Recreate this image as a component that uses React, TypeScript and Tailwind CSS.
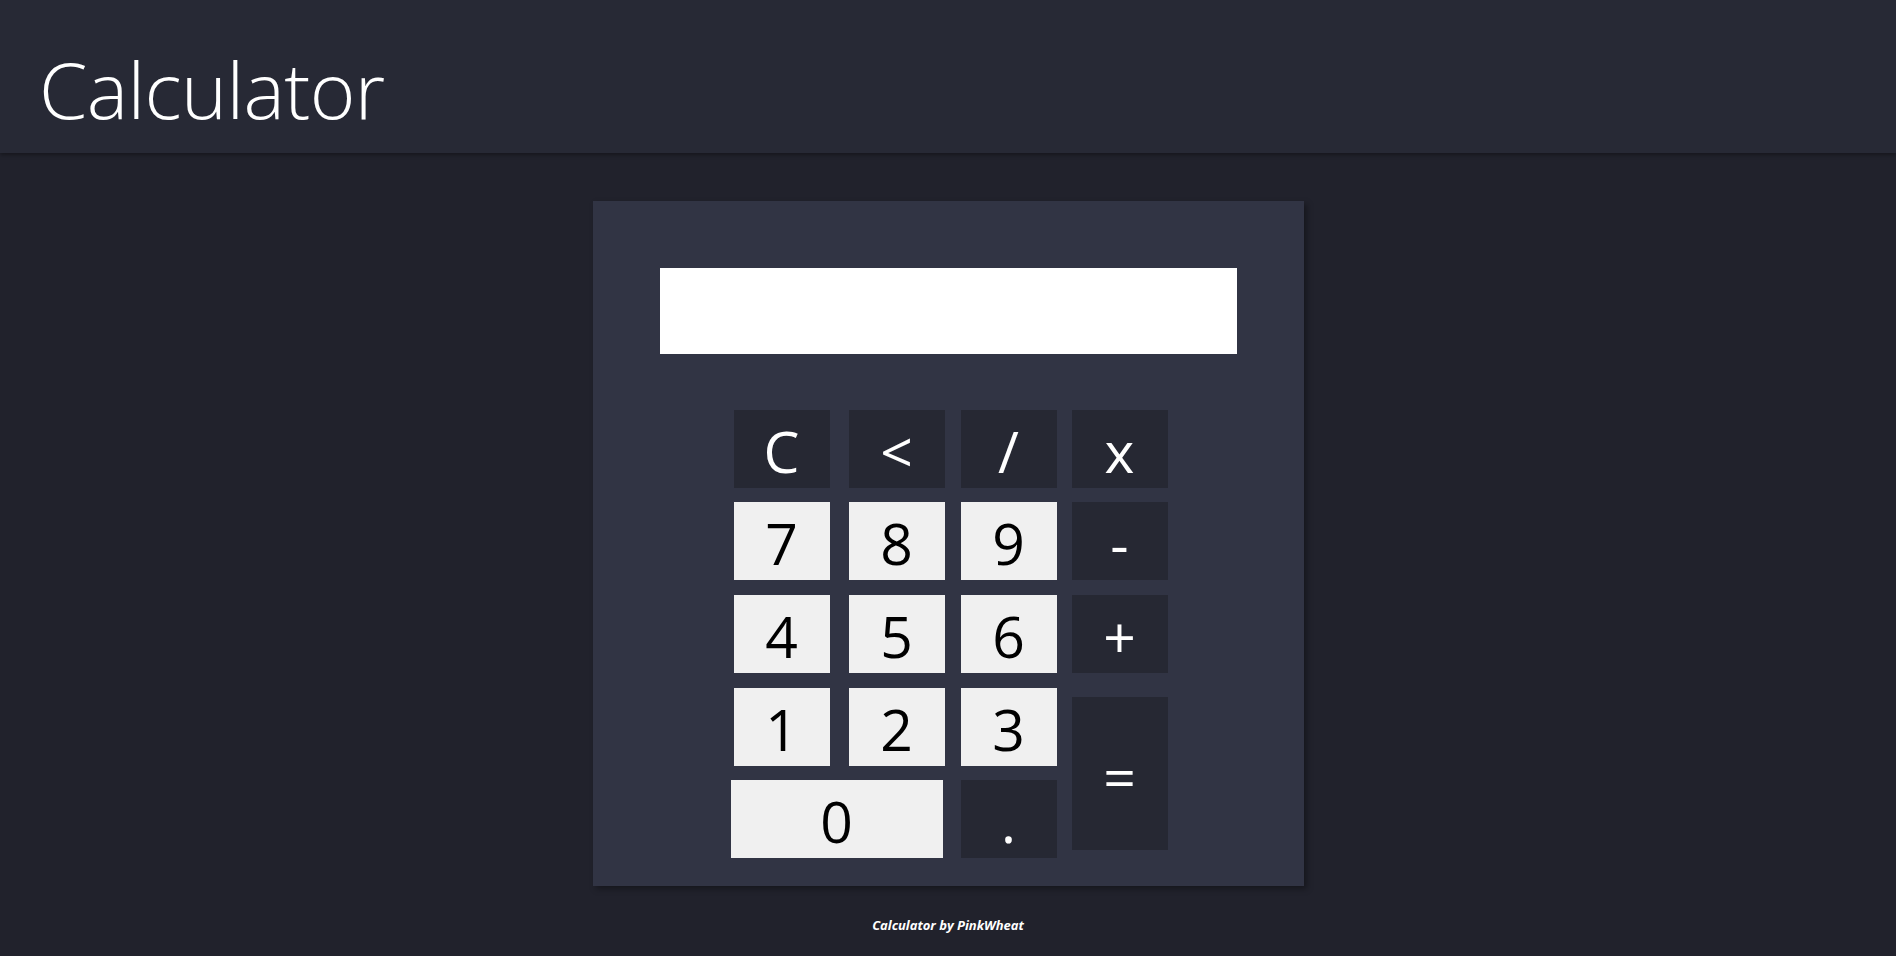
import React from "react";

type Key = {
  label: string;
  light?: boolean;
  className?: string;
};

const keys: Key[] = [
  { label: "C" },
  { label: "<" },
  { label: "/" },
  { label: "x" },
  { label: "7", light: true },
  { label: "8", light: true },
  { label: "9", light: true },
  { label: "-" },
  { label: "4", light: true },
  { label: "5", light: true },
  { label: "6", light: true },
  { label: "+" },
  { label: "1", light: true },
  { label: "2", light: true },
  { label: "3", light: true },
  { label: "=", className: "row-span-2 self-center h-[153px]" },
  { label: "0", light: true, className: "col-span-2 w-[212px] -ml-[3px]" },
  { label: "." },
];

export default function App() {
  return (
    <div
      className="min-h-screen bg-[#21222c] text-white"
      style={{ fontFamily: '"Open Sans", "Noto Sans", sans-serif' }}
    >
      <header className="h-[153px] bg-[#272935] shadow-[0_2px_4px_rgba(0,0,0,0.35)] pl-[39px] pt-[50px]">
        <h1 className="text-[78px] font-light leading-none tracking-[-0.6px]">Calculator</h1>
      </header>

      <main className="flex flex-col items-center pt-[48px]">
        <div className="w-[711px] h-[685px] bg-[#313444] shadow-[3px_3px_6px_rgba(0,0,0,0.35)] flex flex-col items-center pt-[67px]">
          <div className="w-[577px] h-[86px] bg-white" />

          <div className="mt-[56px] ml-[5px] grid grid-cols-[115px_112px_111px_96px] grid-rows-[92px_93px_93px_92px_79px] w-[434px]">
            {keys.map((k) => (
              <button
                key={k.label}
                className={
                  "w-[96px] h-[78px] pt-[6px] flex items-center justify-center text-[57px] leading-normal " +
                  (k.light ? "bg-[#f0f0f0] text-black " : "bg-[#262833] text-white ") +
                  (k.className ?? "")
                }
              >
                {k.label}
              </button>
            ))}
          </div>
        </div>

        <p className="mt-[30px] text-[13px] font-bold italic">Calculator by PinkWheat</p>
      </main>
    </div>
  );
}
